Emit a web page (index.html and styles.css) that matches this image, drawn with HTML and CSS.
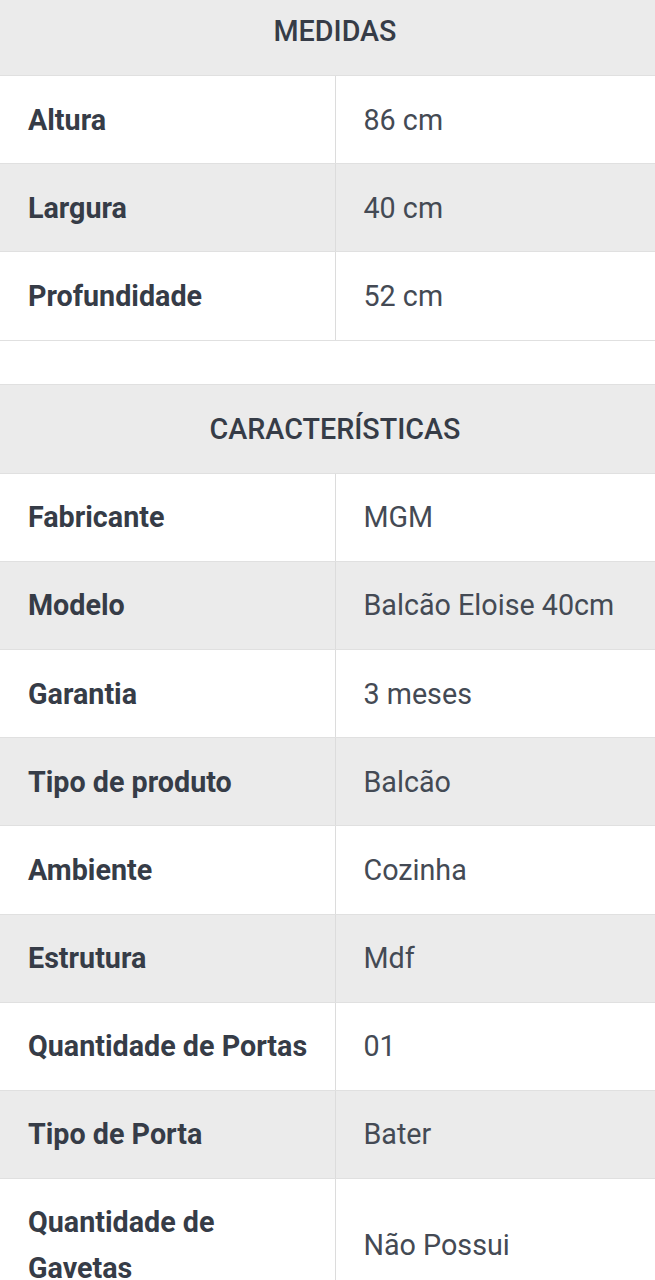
FILE: index.html
```html
<!DOCTYPE html>
<html lang="pt">
<head>
<meta charset="utf-8">
<link rel="stylesheet" href="styles.css">
</head>
<body>
<div class="page">
  <table class="spec spec-first">
    <colgroup><col class="c1"><col class="c2"></colgroup>
    <thead><tr><th colspan="2">MEDIDAS</th></tr></thead>
    <tbody>
      <tr><td class="k">Altura</td><td class="v">86 cm</td></tr>
      <tr><td class="k">Largura</td><td class="v">40 cm</td></tr>
      <tr><td class="k">Profundidade</td><td class="v">52 cm</td></tr>
    </tbody>
  </table>
  <table class="spec">
    <colgroup><col class="c1"><col class="c2"></colgroup>
    <thead><tr><th colspan="2">CARACTERÍSTICAS</th></tr></thead>
    <tbody>
      <tr><td class="k">Fabricante</td><td class="v">MGM</td></tr>
      <tr><td class="k">Modelo</td><td class="v">Balcão Eloise 40cm</td></tr>
      <tr><td class="k">Garantia</td><td class="v">3 meses</td></tr>
      <tr><td class="k">Tipo de produto</td><td class="v">Balcão</td></tr>
      <tr><td class="k">Ambiente</td><td class="v">Cozinha</td></tr>
      <tr><td class="k">Estrutura</td><td class="v">Mdf</td></tr>
      <tr><td class="k">Quantidade de Portas</td><td class="v">01</td></tr>
      <tr><td class="k">Tipo de Porta</td><td class="v">Bater</td></tr>
      <tr><td class="k">Quantidade de Gavetas</td><td class="v">Não Possui</td></tr>
    </tbody>
  </table>
</div>
</body>
</html>
```
FILE: styles.css
```css
html, body { margin: 0; padding: 0; background: #fff; }
body { font-family: Roboto, "Liberation Sans", sans-serif; color: #363c47; }
.page { width: 655px; overflow: hidden; }
.spec { width: 655px; border-collapse: collapse; table-layout: fixed; }
.spec-first { margin-top: -14px; margin-bottom: 43px; }
.c1 { width: 335px; }
.c2 { width: 320px; }
.spec th {
  background: #ebebeb;
  height: 88px;
  padding: 0 0 0 15px;
  font-size: 28.7px;
  font-weight: 500;
  color: #363c47;
  text-align: center;
  border-top: 1px solid #e0e0e0;
  border-bottom: 1px solid #e0e0e0;
}
.spec td {
  height: 88.2px;
  box-sizing: border-box;
  padding: 20px 18px 20px 28px;
  font-size: 28.7px;
  line-height: 46px;
  border-bottom: 1px solid #e0e0e0;
  vertical-align: middle;
}
.spec tbody tr:nth-child(even) td { background: #ebebeb; }
.spec td.k { font-weight: 700; color: #363c47; border-right: 1px solid #dcdcdc; }
.spec td.v { font-weight: 400; color: #444a54; }
```
